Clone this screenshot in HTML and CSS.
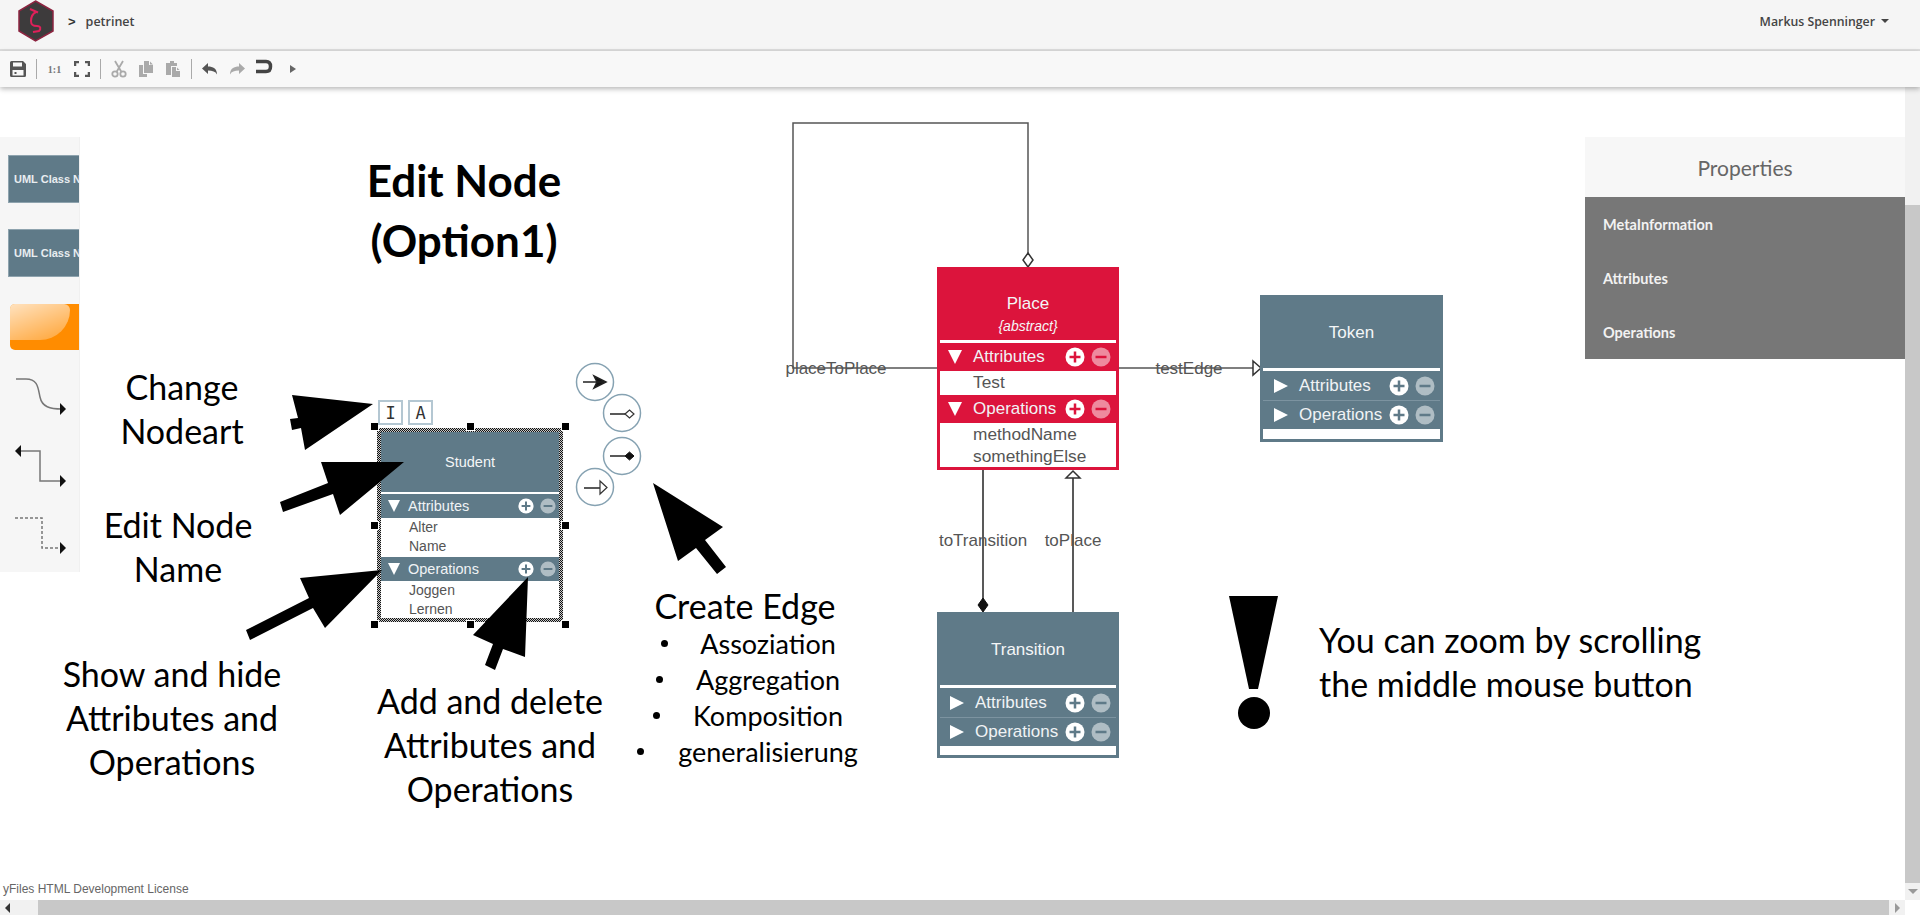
FILE: index.html
```html
<!DOCTYPE html>
<html lang="en">
<head>
<meta charset="utf-8">
<title>petrinet</title>
<link rel="stylesheet" href="styles.css">
</head>
<body>
<div class="app">
  <header class="topbar">
    <svg class="logo" width="36" height="42" viewBox="0 0 36 42">
      <polygon points="17.500,1 35,11 35,31 17.500,41 1,31 1,11" fill="#3d3b3c" stroke="#8c2440" stroke-width="1.500"/>
      <path d="M12 9 L20 12.500 M18 12 C14 14 13 17 13 21 C13 25 15 26 19 26 C23 26 23 29 21 31 L15 32" fill="none" stroke="#e0205a" stroke-width="2"/>
    </svg>
    <span class="crumb-sep">&gt;</span>
    <span class="crumb">petrinet</span>
    <span class="user">Markus Spenninger<i class="caret"></i></span>
  </header>

  <nav class="toolbar">
    <span class="tb"><svg width="18" height="18" viewBox="0 0 18 18"><path class="ic" fill-rule="evenodd" d="M1 2.500A1.500 1.500 0 0 1 2.500 1H14l3 3v11.500a1.500 1.500 0 0 1-1.500 1.500h-13A1.500 1.500 0 0 1 1 15.500ZM4 2.500V6.500H13V2.500ZM3.500 10V15.500H14.500V10Z"/><rect class="ic" x="5.500" y="12" width="2" height="2"/></svg></span>
    <i class="tb-sep"></i>
    <span class="tb tb-text">1:1</span>
    <span class="tb"><svg width="16" height="16" viewBox="0 0 16 16"><path class="ic-line" d="M1 5V1H5M11 1H15V5M15 11V15H11M5 15H1V11"/></svg></span>
    <i class="tb-sep"></i>
    <span class="tb"><svg width="16" height="18" viewBox="0 0 16 18"><path class="ic-off-line" d="M4 1L10.500 12M12 1L5.500 12"/><circle class="ic-off-line" cx="4" cy="14" r="2.700"/><circle class="ic-off-line" cx="12" cy="14" r="2.700"/></svg></span>
    <span class="tb"><svg width="18" height="18" viewBox="0 0 18 18"><path class="ic-off" d="M7 1H12V5H16V13H7ZM13 1.500L16 4.500H13ZM2 5H6V14H10V17H2Z"/></svg></span>
    <span class="tb"><svg width="18" height="18" viewBox="0 0 18 18"><path class="ic-off" d="M2 3H6V1H10V3H13V6H7V15H2ZM8 7H12V11H16V17H8ZM13 7.500L15.500 10H13Z"/></svg></span>
    <i class="tb-sep"></i>
    <span class="tb"><svg width="16" height="14" viewBox="0 0 16 14"><path class="ic" d="M6 1V4.500C11 4.500 15 6.500 15 12.500C13.500 9.500 10.500 8.500 6 8.500V12L0 6.500Z"/></svg></span>
    <span class="tb"><svg width="16" height="14" viewBox="0 0 16 14"><path class="ic-off" d="M10 1V4.500C5 4.500 1 6.500 1 12.500C2.500 9.500 5.500 8.500 10 8.500V12L16 6.500Z"/></svg></span>
    <span class="tb tb-snap"><svg width="18" height="16" viewBox="0 0 18 16"><path class="ic-snap" d="M1 2.500H11C14.500 2.500 15.500 5 15.500 7.500C15.500 10 14.500 12.500 11 12.500H1"/></svg></span>
    <span class="tb"><i class="tri-play"></i></span>
  </nav>

  <main class="stage">
    <div class="canvas">
      <svg class="edges" width="1905" height="920" viewBox="0 0 1905 920">
        <path class="edge" d="M1028 253V123H793V368H937"/>
        <polygon class="marker-open" points="1028,253 1033,260 1028,267 1023,260"/>
        <path class="edge" d="M1119 368H1253"/>
        <polygon class="marker-open" points="1253,361 1261,368 1253,375"/>
        <path class="edge-dark" d="M983 470V600"/>
        <polygon class="marker-fill" points="983,598 988,605 983,612 978,605"/>
        <path class="edge-dark" d="M1073 478V612"/>
        <polygon class="marker-open" points="1066,478 1073,471 1080,478"/>
        <text class="edge-label" x="836" y="374" text-anchor="middle">placeToPlace</text>
        <text class="edge-label" x="1189" y="374" text-anchor="middle">testEdge</text>
        <text class="edge-label" x="983" y="546" text-anchor="middle">toTransition</text>
        <text class="edge-label" x="1073" y="546" text-anchor="middle">toPlace</text>

        <circle class="tool-ring" cx="595" cy="382" r="18.500"/>
        <path class="tool-line" d="M583 382H604M594 376L606 382L594 388L597 382Z"/>
        <circle class="tool-ring" cx="622" cy="413" r="18.500"/>
        <path class="tool-line" d="M610 414H625"/>
        <polygon class="tool-open" points="625,414 629.500,410 634,414 629.500,418"/>
        <circle class="tool-ring" cx="622" cy="456" r="18.500"/>
        <path class="tool-line" d="M610 456H625"/>
        <polygon class="tool-fill" points="625,456 629.500,452 634,456 629.500,460"/>
        <circle class="tool-ring" cx="595" cy="487" r="18.500"/>
        <path class="tool-line" d="M584 488H600"/>
        <polygon class="tool-open" points="600,481 607,487.500 600,494"/>
      </svg>

      <div class="uml uml-place">
        <div class="uml-head"><span>Place</span><em>{abstract}</em></div>
        <div class="uml-sec"><i class="tri-down"></i><span>Attributes</span><span class="uml-btns"><svg class="btn-plus" viewBox="0 0 20 20"><circle cx="10" cy="10" r="9.500"/><path d="M10 4.500V15.500M4.500 10H15.500"/></svg><svg class="btn-minus" viewBox="0 0 20 20"><circle cx="10" cy="10" r="9.500"/><path d="M4.500 10H15.500"/></svg></span></div>
        <div class="uml-items uml-items-one"><div>Test</div></div>
        <div class="uml-sec"><i class="tri-down"></i><span>Operations</span><span class="uml-btns"><svg class="btn-plus" viewBox="0 0 20 20"><circle cx="10" cy="10" r="9.500"/><path d="M10 4.500V15.500M4.500 10H15.500"/></svg><svg class="btn-minus" viewBox="0 0 20 20"><circle cx="10" cy="10" r="9.500"/><path d="M4.500 10H15.500"/></svg></span></div>
        <div class="uml-items uml-items-two"><div>methodName</div><div>somethingElse</div></div>
      </div>

      <div class="uml uml-closed uml-token">
        <div class="uml-head"><span>Token</span></div>
        <div class="uml-sec"><i class="tri-right"></i><span>Attributes</span><span class="uml-btns"><svg class="btn-plus" viewBox="0 0 20 20"><circle cx="10" cy="10" r="9.500"/><path d="M10 4.500V15.500M4.500 10H15.500"/></svg><svg class="btn-minus" viewBox="0 0 20 20"><circle cx="10" cy="10" r="9.500"/><path d="M4.500 10H15.500"/></svg></span></div>
        <div class="uml-sec uml-sec-rule"><i class="tri-right"></i><span>Operations</span><span class="uml-btns"><svg class="btn-plus" viewBox="0 0 20 20"><circle cx="10" cy="10" r="9.500"/><path d="M10 4.500V15.500M4.500 10H15.500"/></svg><svg class="btn-minus" viewBox="0 0 20 20"><circle cx="10" cy="10" r="9.500"/><path d="M4.500 10H15.500"/></svg></span></div>
        <div class="uml-foot"></div>
      </div>

      <div class="uml uml-closed uml-transition">
        <div class="uml-head"><span>Transition</span></div>
        <div class="uml-sec"><i class="tri-right"></i><span>Attributes</span><span class="uml-btns"><svg class="btn-plus" viewBox="0 0 20 20"><circle cx="10" cy="10" r="9.500"/><path d="M10 4.500V15.500M4.500 10H15.500"/></svg><svg class="btn-minus" viewBox="0 0 20 20"><circle cx="10" cy="10" r="9.500"/><path d="M4.500 10H15.500"/></svg></span></div>
        <div class="uml-sec uml-sec-rule"><i class="tri-right"></i><span>Operations</span><span class="uml-btns"><svg class="btn-plus" viewBox="0 0 20 20"><circle cx="10" cy="10" r="9.500"/><path d="M10 4.500V15.500M4.500 10H15.500"/></svg><svg class="btn-minus" viewBox="0 0 20 20"><circle cx="10" cy="10" r="9.500"/><path d="M4.500 10H15.500"/></svg></span></div>
        <div class="uml-foot"></div>
      </div>

      <div class="uml uml-student">
        <div class="uml-head"><span>Student</span></div>
        <div class="uml-sec"><i class="tri-down"></i><span>Attributes</span><span class="uml-btns"><svg class="btn-plus" viewBox="0 0 20 20"><circle cx="10" cy="10" r="9.500"/><path d="M10 4.500V15.500M4.500 10H15.500"/></svg><svg class="btn-minus" viewBox="0 0 20 20"><circle cx="10" cy="10" r="9.500"/><path d="M4.500 10H15.500"/></svg></span></div>
        <div class="uml-items uml-items-a"><div>Alter</div><div>Name</div></div>
        <div class="uml-sec"><i class="tri-down"></i><span>Operations</span><span class="uml-btns"><svg class="btn-plus" viewBox="0 0 20 20"><circle cx="10" cy="10" r="9.500"/><path d="M10 4.500V15.500M4.500 10H15.500"/></svg><svg class="btn-minus" viewBox="0 0 20 20"><circle cx="10" cy="10" r="9.500"/><path d="M4.500 10H15.500"/></svg></span></div>
        <div class="uml-items uml-items-o"><div>Joggen</div><div>Lernen</div></div>
        <i class="h h-tl"></i><i class="h h-tc"></i><i class="h h-tr"></i><i class="h h-ml"></i><i class="h h-mr"></i><i class="h h-bl"></i><i class="h h-bc"></i><i class="h h-br"></i>
      </div>

      <div class="type-btns"><span class="type-btn">I</span><span class="type-btn">A</span></div>

      <svg class="edges" width="1905" height="920" viewBox="0 0 1905 920">
        <polygon class="blob" points="373,404 292,395 298,418 290,419 292,430 301,428 305,450"/>
        <polygon class="blob" points="404,462 321,462 328,483 280,502 283,512 333,494 340,515"/>
        <polygon class="blob" points="382,570 300,578 309,598 246,630 250,640 313,608 325,628"/>
        <polygon class="blob" points="528,577 473,635 493,644 485,665 495,670 503,649 525,657"/>
        <polygon class="blob" points="653,483 723,527 705,540 726,567 717,574 696,548 678,561"/>
        <polygon class="blob" points="1229,596 1278,596 1258,689 1249,689"/>
        <circle class="blob" cx="1254" cy="713" r="16"/>
      </svg>

      <div class="note note-title">Edit Node<br>(Option1)</div>
      <div class="note note-change">Change<br>Nodeart</div>
      <div class="note note-name">Edit Node<br>Name</div>
      <div class="note note-show">Show and hide<br>Attributes and<br>Operations</div>
      <div class="note note-add">Add and delete<br>Attributes and<br>Operations</div>
      <div class="note note-edge">Create Edge</div>
      <ul class="note-list">
        <li>Assoziation</li>
        <li>Aggregation</li>
        <li>Komposition</li>
        <li>generalisierung</li>
      </ul>
      <div class="note note-zoom">You can zoom by scrolling<br>the middle mouse button</div>
      <div class="license">yFiles HTML Development License</div>
    </div>

    <aside class="palette">
      <div class="pal-node">UML Class Node</div>
      <div class="pal-node">UML Class Node</div>
      <div class="pal-orange"><i class="pal-gloss"></i></div>
      <svg class="pal-edge pal-edge-a" width="72" height="40" viewBox="0 0 72 40"><path class="pal-line" d="M8 3H18C30 3 30 12 32 21C34 31 42 33 54 33"/><polygon class="pal-head" points="52,27 58,33 52,39"/></svg>
      <svg class="pal-edge pal-edge-b" width="72" height="42" viewBox="0 0 72 42"><path class="pal-line" d="M12 6H32V36H54"/><polygon class="pal-head" points="13,0 7,6 13,12"/><polygon class="pal-head" points="52,30 58,36 52,42"/></svg>
      <svg class="pal-edge pal-edge-c" width="72" height="38" viewBox="0 0 72 38"><path class="pal-line pal-dash" d="M7 2H34V32H54"/><polygon class="pal-head" points="52,26 58,32 52,38"/></svg>
    </aside>

    <div class="grow"></div>

    <aside class="props">
      <h2 class="props-title">Properties</h2>
      <ul class="props-list">
        <li>MetaInformation</li>
        <li>Attributes</li>
        <li>Operations</li>
      </ul>
    </aside>

    <div class="vscroll">
      <div class="vscroll-thumb"></div>
      <div class="vscroll-btn"><i class="arrow-down"></i></div>
    </div>
  </main>

  <div class="hscroll">
    <div class="hscroll-btn hscroll-left"><i class="arrow-left"></i></div>
    <div class="hscroll-thumb"></div>
    <div class="hscroll-btn hscroll-right"><i class="arrow-right"></i></div>
  </div>
</div>
</body>
</html>
```

FILE: styles.css
```css
* { box-sizing: border-box; }
html, body { margin: 0; height: 100%; background: #fff; overflow: hidden; }
body { font-family: "Liberation Sans", Arial, sans-serif; color: #444; }
ul { margin: 0; padding: 0; list-style: none; }

.app { position: relative; display: flex; flex-direction: column; width: 1920px; height: 920px; padding-bottom: 5px; }

/* top bar */
.topbar { position: relative; z-index: 3; display: flex; align-items: center; height: 51px; padding: 0 31px 7px 18px; background: #f5f5f5; border-bottom: 2px solid #dedede; flex: none; }
.logo { flex: none; }
.crumb-sep { margin-left: 14px; font: 700 13px "Liberation Sans", sans-serif; color: #333; }
.crumb { margin-left: 10px; font: 600 12.500px "Open Sans", sans-serif; color: #444; }
.user { margin-left: auto; display: flex; align-items: center; font: 600 12.300px "Open Sans", sans-serif; color: #444; }
.caret { margin-left: 6px; border: 4px solid transparent; border-top-color: #444; border-bottom: 0; }

/* tool bar */
.toolbar { position: relative; z-index: 3; display: flex; align-items: center; height: 36px; padding-left: 4px; background: #f8f8f8; box-shadow: 0 2px 5px rgba(0, 0, 0, .28); flex: none; }
.tb { display: flex; align-items: center; justify-content: center; width: 27px; height: 24px; flex: none; }
.tb-text { font: 700 10px "Liberation Serif", serif; color: #777; }
.tb-snap { margin-top: -4px; }
.tb-sep { width: 1px; height: 20px; margin: 0 4.500px; background: #aaa; flex: none; }
.ic { fill: #555; }
.ic-off { fill: #aaa; }
.ic-line { fill: none; stroke: #555; stroke-width: 2.5; }
.ic-off-line { fill: none; stroke: #aaa; stroke-width: 1.8; }
.ic-snap { fill: none; stroke: #444; stroke-width: 3.500; }
.tri-play { width: 0; height: 0; border-left: 6px solid #666; border-top: 4px solid transparent; border-bottom: 4px solid transparent; margin-left: 5px; }

/* stage */
.stage { position: relative; display: flex; flex: 1; min-height: 0; }
.canvas { position: absolute; left: 0; top: -87px; width: 1905px; height: 920px; }
.edges { position: absolute; left: 0; top: 0; }
.edge { fill: none; stroke: #555; stroke-width: 1.5; }
.edge-dark { fill: none; stroke: #222; stroke-width: 1.5; }
.marker-open { fill: #fff; stroke: #333; stroke-width: 1.5; }
.marker-fill { fill: #111; stroke: #111; }
.edge-label { font: 17px "Liberation Sans", sans-serif; fill: #555; }
.blob { fill: #000; }
.tool-ring { fill: #fff; fill-opacity: .6; stroke: #86a2b2; stroke-width: 1.500; }
.tool-line { fill: #111; stroke: #222; stroke-width: 1.500; }
.tool-open { fill: #fff; stroke: #333; stroke-width: 1.200; }
.tool-fill { fill: #111; stroke: #111; stroke-width: 1; }

/* UML nodes */
.uml { --c: #5f7a88; position: absolute; display: flex; flex-direction: column; padding: 3px; background: var(--c); font-size: 17px; }
.uml-head { display: flex; flex-direction: column; align-items: center; justify-content: center; height: 73px; border-bottom: 3px solid #fff; color: #f4f6f7; flex: none; }
.uml-head em { font-size: 14px; margin-top: 4px; }
.uml-sec { position: relative; display: flex; align-items: center; height: 28px; padding-left: 8px; color: #f0f3f5; flex: none; }
.uml-sec-rule { border-top: 1px solid #7c93a0; }
.uml-btns { display: flex; gap: 6px; margin-left: auto; padding-right: 5px; flex: none; }
.uml-btns svg { display: block; width: 20px; height: 20px; }
.btn-plus circle { fill: #fff; }
.btn-plus path { stroke: var(--c); stroke-width: 2.500; fill: none; }
.btn-minus circle { fill: #fff; opacity: .5; }
.btn-minus path { stroke: var(--c); stroke-width: 2.500; fill: none; }
.tri-down { width: 0; height: 0; margin-right: 11px; border-top: 14px solid #fff; border-left: 7.500px solid transparent; border-right: 7.500px solid transparent; flex: none; }
.tri-right { width: 0; height: 0; margin-right: 11px; border-left: 14px solid #fff; border-top: 7px solid transparent; border-bottom: 7px solid transparent; flex: none; }
.uml-items { background: #fff; padding-left: 33px; color: #555; font-size: 17.300px; line-height: 22px; flex: none; }
.uml-items-one { height: 24px; }
.uml-items-two { height: 44px; }
.uml-foot { flex: 1; background: #fff; }

.uml-place { --c: #dc143c; left: 937px; top: 267px; width: 182px; height: 203px; }
.uml-place .uml-head { justify-content: flex-start; padding-top: 24px; }
.uml-closed .uml-sec { height: 29px; padding-left: 11px; }
.uml-token { left: 1260px; top: 295px; width: 183px; height: 147px; }
.uml-transition { left: 937px; top: 612px; width: 182px; height: 146px; }
.uml-transition .uml-sec { padding-left: 10px; }

.uml-student { left: 377px; top: 428px; width: 186px; height: 194px; padding: 4px; font-size: 14.500px; background: repeating-conic-gradient(#111 0 25%, #ccc 0 50%) 0 0 / 2px 2px; border-radius: 3px; }
.uml-student .uml-head { height: 62px; border-bottom-width: 2px; background: var(--c); font-size: 14.500px; box-shadow: 0 2px 0 #fff; }
.uml-student .uml-sec { height: 24px; padding-left: 7px; background: var(--c); }
.uml-student .uml-btns { gap: 6px; padding-right: 3px; }
.uml-student .uml-btns svg { width: 16px; height: 16px; }
.uml-student .tri-down { margin-right: 8px; border-top-width: 12px; border-left-width: 6.500px; border-right-width: 6.500px; }
.uml-student .uml-items { padding-left: 28px; font-size: 14px; line-height: 19px; }
.uml-items-a { height: 39px; }
.uml-items-o { height: 37px; overflow: hidden; }

.h { position: absolute; width: 7px; height: 7px; background: #000; outline: 1px solid #fff; }
.h-tl { left: -6px; top: -5px; }
.h-tc { left: 89.500px; top: -5px; }
.h-tr { right: -6px; top: -5px; }
.h-ml { left: -6px; top: 94px; }
.h-mr { right: -6px; top: 94px; }
.h-bl { left: -6px; bottom: -6px; }
.h-bc { left: 89.500px; bottom: -6px; }
.h-br { right: -6px; bottom: -6px; }

.type-btns { position: absolute; left: 378px; top: 400px; display: flex; gap: 5px; }
.type-btn { display: flex; align-items: center; justify-content: center; width: 25px; height: 25px; border: 2px solid #b4c7d2; background: #fff; font: 17px "DejaVu Sans Mono", monospace; color: #333; }

/* annotation notes */
.note { position: absolute; font-family: Lato, sans-serif; font-size: 34px; line-height: 44px; color: #000; text-align: center; white-space: nowrap; }
.note-title { left: 264px; top: 150px; width: 400px; font-weight: 700; font-size: 44px; line-height: 60px; }
.note-change { left: 32px; top: 365px; width: 300px; }
.note-name { left: 28px; top: 503px; width: 300px; }
.note-show { left: 22px; top: 652px; width: 300px; }
.note-add { left: 340px; top: 679px; width: 300px; }
.note-edge { left: 595px; top: 584px; width: 300px; }
.note-zoom { left: 1319px; top: 618px; text-align: left; }
.note-list { position: absolute; left: 630px; top: 626px; width: 276px; font-family: Lato, sans-serif; font-size: 27px; line-height: 36px; color: #000; text-align: center; white-space: nowrap; }
.note-list li { position: relative; }
.note-list li::before { content: ""; position: absolute; top: 14px; width: 7px; height: 7px; border-radius: 50%; background: #000; }
.note-list li:nth-child(1)::before { left: 31px; }
.note-list li:nth-child(2)::before { left: 26px; }
.note-list li:nth-child(3)::before { left: 23px; }
.note-list li:nth-child(4)::before { left: 7px; }

.license { position: absolute; left: 3px; top: 882px; font-size: 12px; line-height: 15px; color: #666; white-space: nowrap; }

/* palette */
.palette { position: relative; display: flex; flex-direction: column; width: 80px; height: 435px; margin-top: 50px; padding: 18px 0 0 8px; background: #f6f6f6; border-right: 1px solid #f0f0f0; overflow: hidden; flex: none; }
.pal-node { display: flex; align-items: center; width: 90px; height: 48px; margin-bottom: 26px; padding-left: 5px; background: #5f7a88; border: 1px solid #8ea3ae; font-size: 11px; font-weight: 700; color: #e8edf0; white-space: nowrap; flex: none; }
.pal-orange { position: relative; width: 90px; height: 46px; margin: 1px 0 26px 2px; border-radius: 5px; background: #ff8c00; overflow: hidden; flex: none; }
.pal-gloss { position: absolute; left: 0; top: 0; width: 60px; height: 36px; border-radius: 5px 8px 40px 0; background: linear-gradient(160deg, rgba(255, 255, 255, .75), rgba(255, 255, 255, .2)); }
.pal-edge { display: block; flex: none; }
.pal-edge-b { margin-top: 29px; }
.pal-edge-c { margin-top: 29px; }
.pal-line { fill: none; stroke: #777; stroke-width: 1.500; }
.pal-dash { stroke-dasharray: 3 2; }
.pal-head { fill: #111; }

.grow { flex: 1; }

/* properties */
.props { position: relative; width: 320px; margin-top: 50px; align-self: flex-start; flex: none; }
.props-title { display: flex; align-items: center; justify-content: center; height: 60px; margin: 0; background: #f7f7f7; font: 400 21px Lato, sans-serif; color: #666; }
.props-list { background: #777; color: #f2f2f2; font: 700 14.500px Lato, sans-serif; }
.props-list li { display: flex; align-items: center; height: 54px; padding-left: 18px; }

/* scrollbars */
.vscroll { position: relative; display: flex; flex-direction: column; width: 15px; padding-top: 118px; background: #f1f1f1; flex: none; }
.vscroll-thumb { flex: 1; background: #c8c8c8; }
.vscroll-btn { display: flex; align-items: center; justify-content: center; height: 17px; flex: none; }
.arrow-down { border: 5px solid transparent; border-top-color: #999; border-bottom: 0; }
.hscroll { display: flex; width: 1905px; height: 15px; background: #f1f1f1; flex: none; }
.hscroll-btn { display: flex; align-items: center; flex: none; }
.hscroll-left { width: 38px; padding-left: 5px; }
.hscroll-right { width: 16px; justify-content: center; }
.hscroll-thumb { flex: 1; background: #c8c8c8; }
.arrow-left { border: 5px solid transparent; border-right-color: #333; border-left: 0; }
.arrow-right { border: 5px solid transparent; border-left-color: #999; border-right: 0; }
```
